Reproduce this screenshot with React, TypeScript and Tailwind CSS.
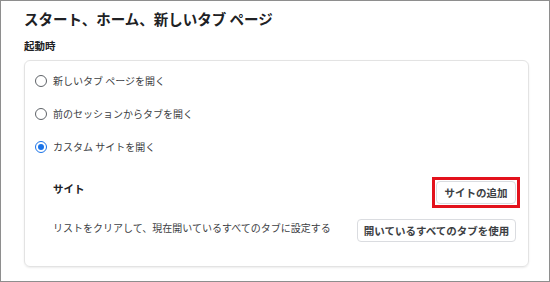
import React from "react";

const font = { fontFamily: '"Noto Sans CJK JP", "Noto Sans", sans-serif' };

function Radio({ checked }: { checked?: boolean }) {
  return checked ? (
    <span className="flex h-[12px] w-[12px] items-center justify-center rounded-full border-[1.5px] border-[#1a73e8]">
      <span className="h-[6px] w-[6px] rounded-full bg-[#1a73e8]" />
    </span>
  ) : (
    <span className="h-[12px] w-[12px] rounded-full border-[1.5px] border-[#5f6368]" />
  );
}

export default function App() {
  const rows = [
    { label: "新しいタブ ページを開く", checked: false },
    { label: "前のセッションからタブを開く", checked: false },
    { label: "カスタム サイトを開く", checked: true },
  ];
  return (
    <div
      className="h-[282px] w-[550px] overflow-hidden border border-[#8e8e8e] bg-white text-[#202124]"
      style={font}
    >
      <div className="pl-[23px] pr-[20px] pt-[8px]">
        <div className="h-[20px] text-[14.5px] font-bold leading-[20px]">
          スタート、ホーム、新しいタブ ページ
        </div>
        <div className="mt-[10px] h-[14px] text-[10.5px] font-bold leading-[14px]">起動時</div>
        <div className="mt-[7px] h-[207px] rounded-[6px] border border-[#e3e3e3] pl-[10px] pr-[12px] pt-[3px] shadow-[0_1px_2px_rgba(0,0,0,0.08)]">
          {rows.map((r) => (
            <div key={r.label} className="flex h-[33px] items-center gap-[6px]">
              <Radio checked={r.checked} />
              <span className="text-[10px] leading-[14px] text-[#3c4043]">{r.label}</span>
            </div>
          ))}
          <div className="ml-[18px] mt-[18px] flex h-[23px] items-center justify-between">
            <span className="-mt-[8px] text-[10.5px] font-bold leading-[14px]">サイト</span>
            <div className="-m-[4px] flex border-[3px] border-[#e3121c] p-[1px]">
              <button
                className="h-[23px] w-[80px] rounded-[4px] border border-[#dadce0] bg-white text-[10.5px] font-bold text-[#3c4043]"
                style={font}
              >
                サイトの追加
              </button>
            </div>
          </div>
          <div className="ml-[18px] mt-[15px] flex h-[23px] items-center justify-between">
            <span className="-mt-[6px] text-[10px] leading-[14px] text-[#3c4043]">
              リストをクリアして、現在開いているすべてのタブに設定する
            </span>
            <button
              className="h-[23px] w-[159px] rounded-[4px] border border-[#dadce0] bg-white text-[10.5px] font-bold text-[#3c4043]"
              style={font}
            >
              開いているすべてのタブを使用
            </button>
          </div>
        </div>
      </div>
    </div>
  );
}
